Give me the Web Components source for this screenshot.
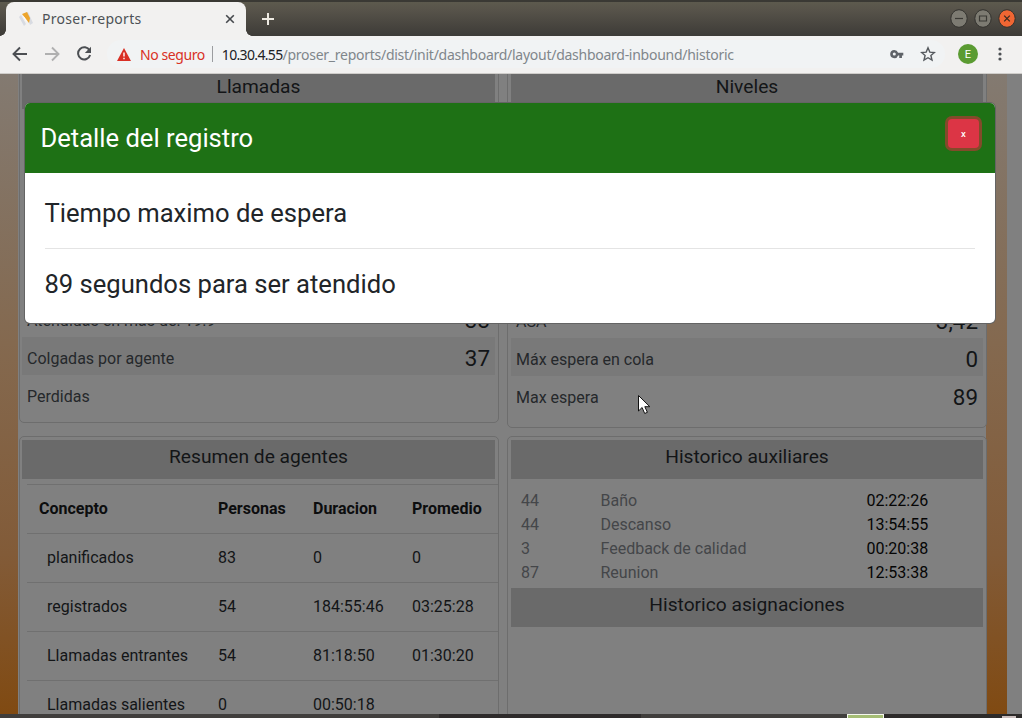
<!DOCTYPE html>
<html lang="es">
<head>
<meta charset="utf-8">
<title>Proser-reports</title>
<style>
html,body{margin:0;height:100%;overflow:hidden}
body{font-family:Roboto,sans-serif;background:#808080}
</style>
</head>
<body>
<browser-window></browser-window>
<script>
function define(name, html, setup) {
  const t = document.createElement('template');
  t.innerHTML = html;
  customElements.define(name, class extends HTMLElement {
    connectedCallback() {
      if (this.shadowRoot) return;
      this.attachShadow({mode: 'open'}).append(t.content.cloneNode(true));
      if (setup) setup(this, this.shadowRoot);
    }
  });
}

define('title-bar', `<style>
:host{display:flex;height:36px;box-sizing:border-box;padding:2px 6px 0 6px;background:linear-gradient(#3a3934 0 2px,#5d5a4e 2px,#57534a 10px,#3d3b37 36px);font-family:"Noto Sans",sans-serif}
.tab{position:relative;display:flex;align-items:center;width:240px;height:34px;box-sizing:border-box;background:#f2f1f0;border-radius:8px 8px 0 0;padding:0 11px 1px 12px;color:#4d5156;font-size:14px}
.tab:before,.tab:after{content:"";position:absolute;bottom:0;width:6px;height:6px}
.tab:before{left:-6px;background:radial-gradient(circle at 0 0,transparent 5.5px,#f2f1f0 6px)}
.tab:after{right:-6px;background:radial-gradient(circle at 100% 0,transparent 5.5px,#f2f1f0 6px)}
.name{flex:1;margin-left:8px;letter-spacing:.3px}
.plus{margin:10px 0 0 15px}
.win{display:flex;gap:6px;margin:7px 0 0 auto}
svg{display:block;flex:none}
</style>
<div class="tab"><svg width="16" height="16" viewBox="0 0 16 16"><path d="M1 6l2-2 5 9-2 2zM7 2l3-1 5 11-3 2z" fill="#d8dbe2"/><path d="M4 3l5-2 3 6-1 5-3-4z" fill="#eda52c"/><path d="M5.500 5.500l3 5" stroke="#fff"/></svg><span class="name">Proser-reports</span><svg width="10" height="10" viewBox="0 0 10 10"><path d="M1.200 1.200l7.600 7.600m0-7.600l-7.600 7.600" stroke="#45484c" stroke-width="1.6"/></svg></div>
<svg class="plus" width="14" height="14" viewBox="0 0 14 14"><path d="M7 1v12M1 7h12" stroke="#eeeae2" stroke-width="2"/></svg>
<div class="win">
<svg width="18" height="19" viewBox="0 0 18 19"><ellipse cx="9" cy="9.5" rx="8.2" ry="8.8" fill="#7d7b72" stroke="#33322e"/><path d="M5 9.5h8" stroke="#3b3a35" stroke-width="1.2"/></svg>
<svg width="18" height="19" viewBox="0 0 18 19"><ellipse cx="9" cy="9.5" rx="8.2" ry="8.8" fill="#7d7b72" stroke="#33322e"/><path d="M5.5 7h7v5h-7z" fill="none" stroke="#3b3a35" stroke-width="1.2"/></svg>
<svg width="18" height="19" viewBox="0 0 18 19"><ellipse cx="9" cy="9.5" rx="8.2" ry="8.8" fill="#f06633" stroke="#33322e"/><path d="M6.2 6.6l5.6 5.8m0-5.8l-5.6 5.8" stroke="#3b2a20" stroke-width="1.3"/></svg>
</div>`);

define('address-bar', `<style>
:host{display:flex;align-items:center;height:38px;box-sizing:border-box;border-bottom:1px solid #cfcdca;background:#f2f1f0;padding:0 14px 1px 12px;font:14px "Noto Sans",sans-serif}
.nav{display:flex;gap:16px}
.box{flex:1;display:flex;align-items:center;height:28px;margin:0 13px 0 15px;border-radius:14px;background:#f1f3f4;padding:0 9px 0 10px}
.warn{color:#d93025;margin-left:9px;letter-spacing:-.42px}
i{width:1px;height:16px;background:#9b9da0;margin:0 9px 0 7px}
.url{color:#80868b;flex:1;white-space:nowrap}
.path{letter-spacing:-.265px}
b{font-weight:400;color:#202124;letter-spacing:-.66px}
.me{width:20px;height:20px;border-radius:50%;background:#5b9b32;color:#fff;display:grid;place-items:center;font:11px Roboto,sans-serif;margin-right:14px}
svg{display:block;flex:none}
.star{margin-left:16px}
</style>
<div class="nav">
<svg width="16" height="16" viewBox="0 0 16 16"><path d="M15 8H2M8 1.5L1.5 8 8 14.500" fill="none" stroke="#4c4f53" stroke-width="1.9"/></svg>
<svg width="16" height="16" viewBox="0 0 16 16"><path d="M1 8h13M8 1.500L14.500 8 8 14.500" fill="none" stroke="#b0b0b0" stroke-width="1.900"/></svg>
<svg width="16" height="16" viewBox="0 0 16 16"><path d="M13.600 4.500A6.100 6.100 0 1 0 14.100 9" fill="none" stroke="#4c4f53" stroke-width="2"/><path d="M15 .8V7H8.800z" fill="#4c4f53"/></svg>
</div>
<div class="box">
<svg width="14" height="13" viewBox="0 0 14 13"><path d="M7 0l7 13H0z" fill="#d93025"/><path d="M7 4.500v4M7 9.700v1.500" stroke="#fff" stroke-width="1.400"/></svg>
<span class="warn">No seguro</span><i></i><span class="url"><b>10.30.4.55</b><span class="path">/proser_reports/dist/init/dashboard/layout/dashboard-inbound/historic</span></span>
<svg width="14" height="9" viewBox="0 0 15 10"><path d="M4.500 0A4.500 4.500 0 1 0 8.700 6H10v3h3V6h1.500V3H8.700A4.500 4.500 0 0 0 4.500 0zm0 2.800a1.700 1.700 0 1 1 0 3.400 1.700 1.700 0 0 1 0-3.400z" fill="#5f6368"/></svg>
<svg class="star" width="16" height="16" viewBox="0 0 16 16"><path d="M8 1.800l1.800 4.300 4.600.4-3.500 3 1.100 4.600L8 11.700l-4 2.400 1.100-4.600-3.500-3 4.600-.4z" fill="none" stroke="#55595e" stroke-width="1.400"/></svg>
</div>
<div class="me">E</div>
<svg width="16" height="16" viewBox="0 0 16 16"><g fill="#4c4f53"><circle cx="8" cy="3" r="1.600"/><circle cx="8" cy="8" r="1.600"/><circle cx="8" cy="13" r="1.600"/></g></svg>`);

define('section-heading', `<style>
:host{display:block;height:39px;line-height:33px;background:#6a6a6a;color:#131517;text-align:center;font-size:19.200px}
</style><slot></slot>`);

define('panel-card', `<style>
:host{display:block;box-sizing:border-box;border:1px solid #6d6d6d;border-radius:5px;padding:3px 3px 0 2px;background:#808080;overflow:hidden}
:host([side=right]){padding-left:3px}
</style><slot></slot>`);

define('metric-row', `<style>
:host{display:flex;justify-content:space-between;align-items:center;height:38px;box-sizing:border-box;padding:4px 5px 0;color:#25282b;font-size:16px}
:host([striped]){background:#797979}
.v{font-size:22.400px;color:#131517}
</style><slot></slot><span class="v"></span>`, (h, r) => { r.querySelector('.v').textContent = h.getAttribute('value') || ''; });

define('agent-table', `<style>
:host{display:block;margin:5px -3px 0 5px;color:#131517;font-size:16px}
.r{display:grid;grid-template-columns:191px 95px 99px 1fr;height:49px;box-sizing:border-box;border-top:1px solid #707070;align-items:center;padding-bottom:2px}
.r>:first-child{padding-left:20px}
.h{font-weight:700;color:#0c0d0e}.h>:first-child{padding-left:12px}
</style><div id="t"></div>`, (h, r) => {
  const rows = [['Concepto','Personas','Duracion','Promedio'],['planificados','83','0','0'],['registrados','54','184:55:46','03:25:28'],['Llamadas entrantes','54','81:18:50','01:30:20'],['Llamadas salientes','0','00:50:18','']];
  r.getElementById('t').innerHTML = rows.map((x, i) => `<div class="r${i ? '' : ' h'}">${x.map(c => `<span>${c}</span>`).join('')}</div>`).join('');
});

define('aux-list', `<style>
:host{display:block;padding:10px 0 3px 10px;font-size:16px;line-height:24px;color:#444649}
div{display:grid;grid-template-columns:79.500px 266px 1fr}
b{font-weight:400;color:#050505}
</style>
<div><span>44</span><span>Baño</span><b>02:22:26</b></div>
<div><span>44</span><span>Descanso</span><b>13:54:55</b></div>
<div><span>3</span><span>Feedback de calidad</span><b>00:20:38</b></div>
<div><span>87</span><span>Reunion</span><b>12:53:38</b></div>`);

define('report-page', `<style>
:host{display:flex;height:640px;overflow:hidden;background:linear-gradient(#837a71,#84694f 42%,#825b38 75%,#804a12)}
main{width:968px;margin-left:18px;box-sizing:border-box;padding:0 0 0 1px;background:#808080;display:grid;grid-template-columns:480px 480px;column-gap:8px;grid-template-rows:370px 320px;align-items:start;margin-top:-8px;height:700px;flex:none}
aside{width:15px;background:#808080;margin-left:auto}
.a{height:357px}.b{height:362px}.c{height:320px}
.a metric-row:first-of-type{margin-top:190px}
.b metric-row:first-of-type{margin-top:191px}
</style>
<main>
<panel-card class="a"><section-heading>Llamadas</section-heading><metric-row value="33">Atendidas en mas de: 19.9</metric-row><metric-row striped value="37">Colgadas por agente</metric-row><metric-row>Perdidas</metric-row></panel-card>
<panel-card side="right" class="b"><section-heading>Niveles</section-heading><metric-row value="3,42">ASA</metric-row><metric-row striped value="0">Máx espera en cola</metric-row><metric-row value="89">Max espera</metric-row></panel-card>
<panel-card class="c"><section-heading>Resumen de agentes</section-heading><agent-table></agent-table></panel-card>
<panel-card side="right" class="c"><section-heading>Historico auxiliares</section-heading><aux-list></aux-list><section-heading>Historico asignaciones</section-heading></panel-card>
</main><aside></aside>`);

define('detail-modal', `<style>
:host{display:block;width:970px;height:220px;border-radius:5px;overflow:hidden;background:#fff;color:#212529;box-shadow:0 0 0 1px #646464;font-size:25.600px}
header{display:flex;justify-content:space-between;height:70px;box-sizing:border-box;background:#1e7115;color:#fff;padding:16px 16px 0 15.400px}
h4,p{margin:0;font-weight:400;line-height:38px}
p{margin-left:-.6px}
button{width:31px;height:29px;border:0;border-radius:4px;background:#dc3545;color:#fff;font:500 9.500px Roboto,sans-serif;padding:0;box-shadow:0 0 0 3px #824b2a}
section{padding:21px 20px}
hr{margin:16px 0;border:0;border-top:1px solid #e4e4e4}
</style>
<header><h4><slot name="title"></slot></h4><button>x</button></header>
<section><p><slot name="metric"></slot></p><hr><p><slot></slot></p></section>`);

define('dock-strip', `<style>
:host{display:flex;height:4px;background:linear-gradient(90deg,#403e3c 0 439px,#2e2b2b 439px 641px,#403e3c 641px 847px,#2d2b2a 847px)}
i{width:37px;height:4px;box-sizing:border-box;margin-left:847px;border:1px solid #f5f7ee;border-bottom:0;background:#a5bd75}
u{width:14px;height:2px;background:#cbbfbe;margin:2px 0 0 118px}
</style><i></i><u></u>`);

define('browser-window', `<style>
:host{display:block;position:relative;width:1022px;height:718px;overflow:hidden}
detail-modal{position:absolute;left:25px;top:103px}
.cursor{position:absolute;left:637px;top:394px}
</style>
<title-bar></title-bar><address-bar></address-bar><report-page></report-page><dock-strip></dock-strip>
<detail-modal><span slot="title">Detalle del registro</span><span slot="metric">Tiempo maximo de espera</span>89 segundos para ser atendido</detail-modal>
<svg class="cursor" width="14" height="21" viewBox="0 0 14 21"><path d="M1.500 1.500v15.500l3.600-3.500 2.600 6 2.700-1.200-2.600-5.600h5z" fill="#fff" stroke="#111"/></svg>`);
</script>
</body>
</html>
